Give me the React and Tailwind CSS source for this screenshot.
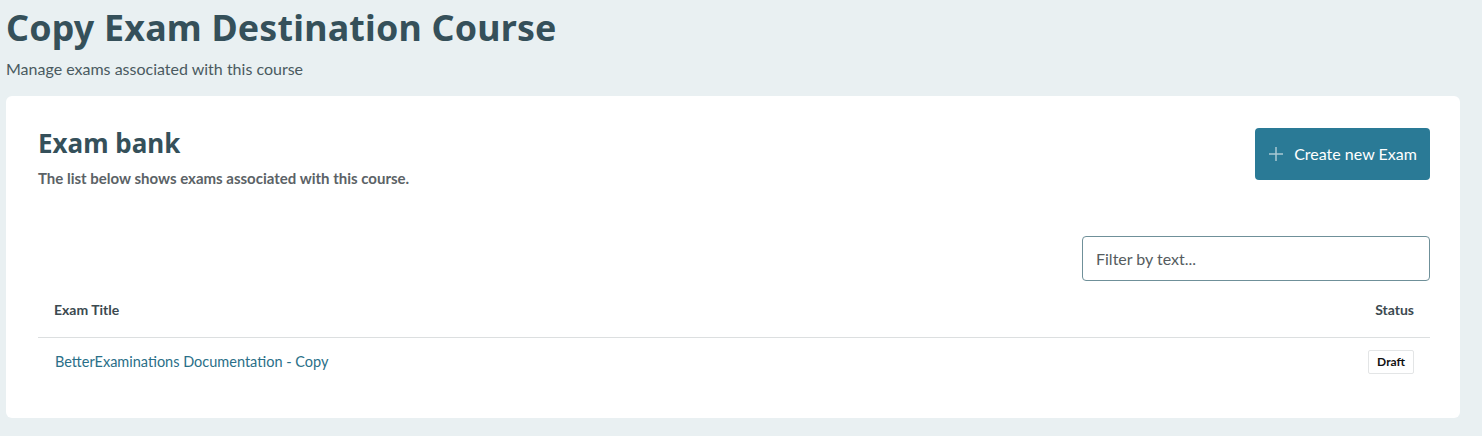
export default function App() {
  const heading = { fontFamily: '"Noto Sans", "Open Sans", sans-serif' };
  return (
    <div className="min-h-[436px] bg-[#e9f0f2] px-[6px] pb-[18px]" style={{ fontFamily: 'Lato, "Open Sans", sans-serif' }}>
      <div className="pt-[4px]">
        <h1 className="text-[35.8px] leading-[46px] font-bold text-[#35505a] tracking-[0.2px]" style={heading}>
          Copy Exam Destination Course
        </h1>
        <p className="mt-[10px] text-[16px] leading-[18px] text-[#4a5a60]">Manage exams associated with this course</p>
      </div>
      <div className="mt-[18px] mr-[16px] rounded-[6px] bg-white pl-[32px] pr-[30px] pt-[32px] pb-[32px]">
        <div className="flex h-[52px] items-start justify-between">
          <div>
            <h2 className="text-[26px] leading-[30px] font-bold text-[#35505a]" style={heading}>Exam bank</h2>
            <p className="mt-[11px] text-[15px] leading-[18px] font-bold text-[#5b6266]">The list below shows exams associated with this course.</p>
          </div>
          <button className="flex h-[52px] w-[175px] items-center justify-center gap-[10px] rounded-[4px] bg-[#2a7a96] text-[16px] text-white">
            <svg width="16" height="16" viewBox="0 0 16 16" className="text-[#a9c9d4]">
              <path d="M8 1v14M1 8h14" stroke="currentColor" strokeWidth="1.5" />
            </svg>
            <span>Create new Exam</span>
          </button>
        </div>
        <div className="mt-[56px] flex justify-end">
          <input
            placeholder="Filter by text..."
            className="h-[45px] w-[348px] rounded-[4px] border border-[#6f9099] px-[13px] text-[16px] text-[#333] placeholder:text-[#555c60] outline-none"
          />
        </div>
        <div className="mt-[10px]">
          <div className="flex h-[47px] items-center justify-between border-b border-[#dcdfe0] px-[16px] pb-[9px] text-[14px] font-bold text-[#3c4a50]">
            <span>Exam Title</span>
            <span>Status</span>
          </div>
          <div className="flex h-[48px] items-center justify-between px-[16px]">
            <span className="pl-[1px] text-[14.5px] text-[#2a6f88]">BetterExaminations Documentation - Copy</span>
            <span className="flex h-[24px] items-center rounded-[2px] border border-[#e3e5e6] px-[8px] text-[12px] font-bold text-[#111]">Draft</span>
          </div>
        </div>
      </div>
    </div>
  );
}
